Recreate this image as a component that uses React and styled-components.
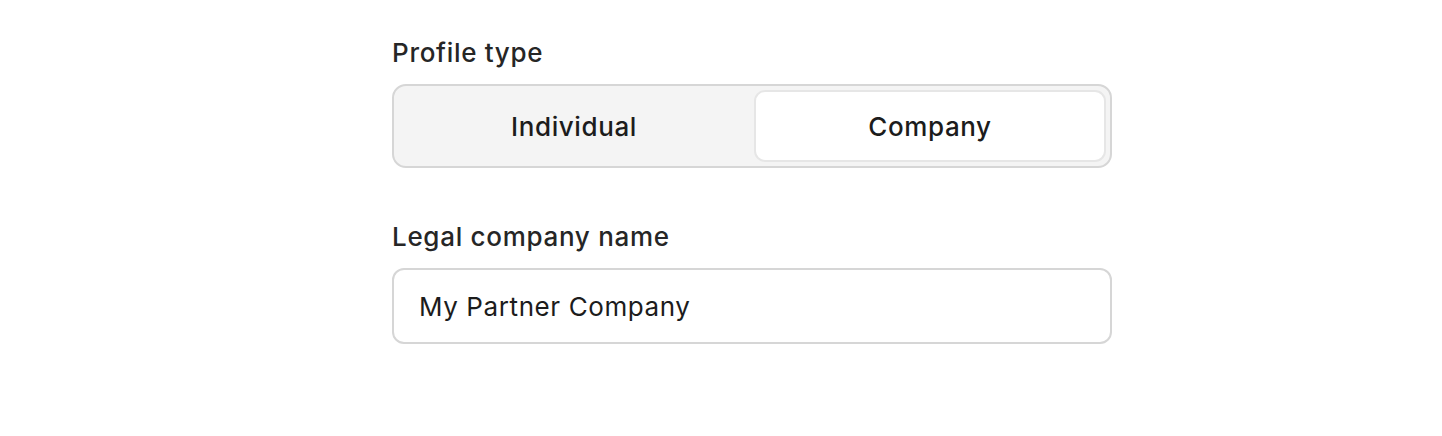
import React, { useState } from "react";
import styled, { createGlobalStyle } from "styled-components";

const GlobalStyle = createGlobalStyle`
  body {
    margin: 0;
    background: #fff;
    font-family: Inter, "Noto Sans", sans-serif;
    color: #1f1f1f;
  }
`;

export default function App() {
  const [type, setType] = useState("company");
  const [name, setName] = useState("My Partner Company");

  return (
    <>
      <GlobalStyle />
      <Form>
        <Field>
          <Label>Profile type</Label>
          <Segmented>
            <SegmentButton
              $active={type === "individual"}
              onClick={() => setType("individual")}
            >
              Individual
            </SegmentButton>
            <SegmentButton
              $active={type === "company"}
              onClick={() => setType("company")}
            >
              Company
            </SegmentButton>
          </Segmented>
        </Field>
        <Field>
          <Label>Legal company name</Label>
          <TextInput value={name} onChange={(e) => setName(e.target.value)} />
        </Field>
      </Form>
    </>
  );
}

const Form = styled.div`
  width: 720px;
  margin-left: 392px;
  padding-top: 37px;
  display: flex;
  flex-direction: column;
  gap: 53px;
`;

const Field = styled.div`
  display: flex;
  flex-direction: column;
  gap: 15px;
`;

const Label = styled.label`
  font-size: 26px;
  line-height: 32px;
  font-weight: 500;
  letter-spacing: 0.7px;
  color: #262626;
`;

const Segmented = styled.div`
  display: grid;
  grid-template-columns: 1fr 1fr;
  gap: 4px;
  padding: 4px;
  background: #f4f4f4;
  border: 2px solid #d6d6d6;
  border-radius: 14px;
`;

const SegmentButton = styled.button`
  height: 72px;
  border: 2px solid ${(p) => (p.$active ? "#e6e6e6" : "transparent")};
  border-radius: 11px;
  background: ${(p) => (p.$active ? "#fff" : "transparent")};
  font-family: inherit;
  font-size: 26px;
  font-weight: 500;
  letter-spacing: 0.6px;
  color: #1c1c1c;
  cursor: pointer;
`;

const TextInput = styled.input`
  box-sizing: border-box;
  height: 76px;
  padding: 0 25px;
  border: 2px solid #d6d6d6;
  border-radius: 12px;
  font-family: inherit;
  font-size: 26px;
  letter-spacing: 0.6px;
  color: #1c1c1c;
  outline: none;
`;
